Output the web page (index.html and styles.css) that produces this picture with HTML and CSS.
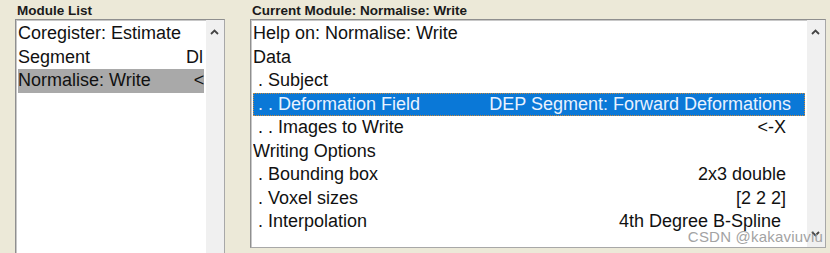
FILE: index.html
```html
<!doctype html>
<html>
  <head>
    <meta charset="utf-8">
    <title>Batch Editor</title>
    <link rel="stylesheet" href="styles.css">
  </head>
  <body>
    <div class="panes">
      <div class="pane pane-modules">
        <div class="caption">Module List</div>
        <div class="listbox listbox-tall">
          <div class="items">
            <div class="row"><span class="key">Coregister: Estimate</span></div>
            <div class="row"><span class="key">Segment</span><span class="tail tail-seg">Dl</span></div>
            <div class="row picked"><span class="key">Normalise: Write</span><span class="tail tail-norm">&lt;</span></div>
          </div>
          <div class="scroll">
            <svg class="arrow up" width="9" height="6" viewBox="0 0 9 6"><polyline points="1,5 4.5,1.5 8,5" fill="none" stroke="#444" stroke-width="1.8"/></svg>
          </div>
        </div>
      </div>
      <div class="pane pane-current">
        <div class="caption">Current Module: Normalise: Write</div>
        <div class="listbox">
          <div class="items">
            <div class="row"><span class="key">Help on: Normalise: Write</span></div>
            <div class="row"><span class="key">Data</span></div>
            <div class="row"><span class="key">&nbsp;. Subject</span></div>
            <div class="row active"><span class="key">&nbsp;. . Deformation Field</span><span class="val val-dep">DEP Segment: Forward Deformations</span></div>
            <div class="row"><span class="key">&nbsp;. . Images to Write</span><span class="val">&lt;-X</span></div>
            <div class="row"><span class="key">Writing Options</span></div>
            <div class="row"><span class="key">&nbsp;. Bounding box</span><span class="val">2x3 double</span></div>
            <div class="row"><span class="key">&nbsp;. Voxel sizes</span><span class="val">[2 2 2]</span></div>
            <div class="row"><span class="key">&nbsp;. Interpolation</span><span class="val val-short">4th Degree B-Spline</span></div>
          </div>
          <div class="scroll">
            <svg class="arrow up" width="9" height="6" viewBox="0 0 9 6"><polyline points="1,5 4.5,1.5 8,5" fill="none" stroke="#444" stroke-width="1.8"/></svg>
            <svg class="arrow down" width="9" height="6" viewBox="0 0 9 6"><polyline points="1,1 4.5,4.5 8,1" fill="none" stroke="#444" stroke-width="1.8"/></svg>
          </div>
        </div>
      </div>
    </div>
    <div class="watermark">CSDN @kakaviuviu</div>
  </body>
</html>
```

FILE: styles.css
```css
body {
  margin: 0;
  height: 253px;
  overflow: hidden;
  background: #ece9d8;
  font: 18px/23.5px "Liberation Sans", Arial, sans-serif;
  color: #111;
  position: relative;
}

.panes {
  display: flex;
  gap: 25px;
  padding: 2px 0 0 15px;
}

.pane {
  flex: none;
  min-width: 0;
}

.pane-modules {
  width: 210px;
}

.pane-current {
  width: 576px;
}

.caption {
  font: bold 13.5px/17px "Liberation Sans", Arial, sans-serif;
  color: #1a1a1a;
  padding-left: 2px;
}

.listbox {
  display: flex;
  height: 229px;
  box-sizing: border-box;
  border: 1px solid #8f8f8f;
  border-right-color: #a8a8a8;
  border-bottom-color: #a8a8a8;
  box-shadow: inset 1px 1px 0 #c8c8c8;
  background: white;
  overflow: hidden;
}

.listbox-tall {
  height: 234px;
  border-bottom: none;
}

.items {
  flex: 1;
  min-width: 0;
  padding: 2px 2px 0 2px;
}

.row {
  display: flex;
  height: 23.5px;
  white-space: pre;
  overflow: hidden;
}

.key {
  flex: none;
}

.val {
  margin-left: auto;
  padding-right: 19px;
}

.val-dep {
  padding-right: 14px;
}

.val-short {
  padding-right: 24px;
}

.tail-seg {
  margin-left: 96px;
}

.tail-norm {
  margin-left: 43px;
}

.picked {
  background: #a9a9a9;
}

.active {
  background: #0a78d7;
  color: #e8f2ff;
  outline: 1px dotted #c9893b;
  outline-offset: -1px;
}

.scroll {
  width: 18px;
  flex: none;
  background: #f0f0f0;
  position: relative;
}

.arrow {
  position: absolute;
  left: 4px;
}

.up {
  top: 9px;
}

.down {
  bottom: 10px;
}

.watermark {
  position: absolute;
  right: 7px;
  top: 228px;
  font: 15px/18px "Liberation Sans", Arial, sans-serif;
  color: #a3a3a3;
  letter-spacing: 0.2px;
}
```
